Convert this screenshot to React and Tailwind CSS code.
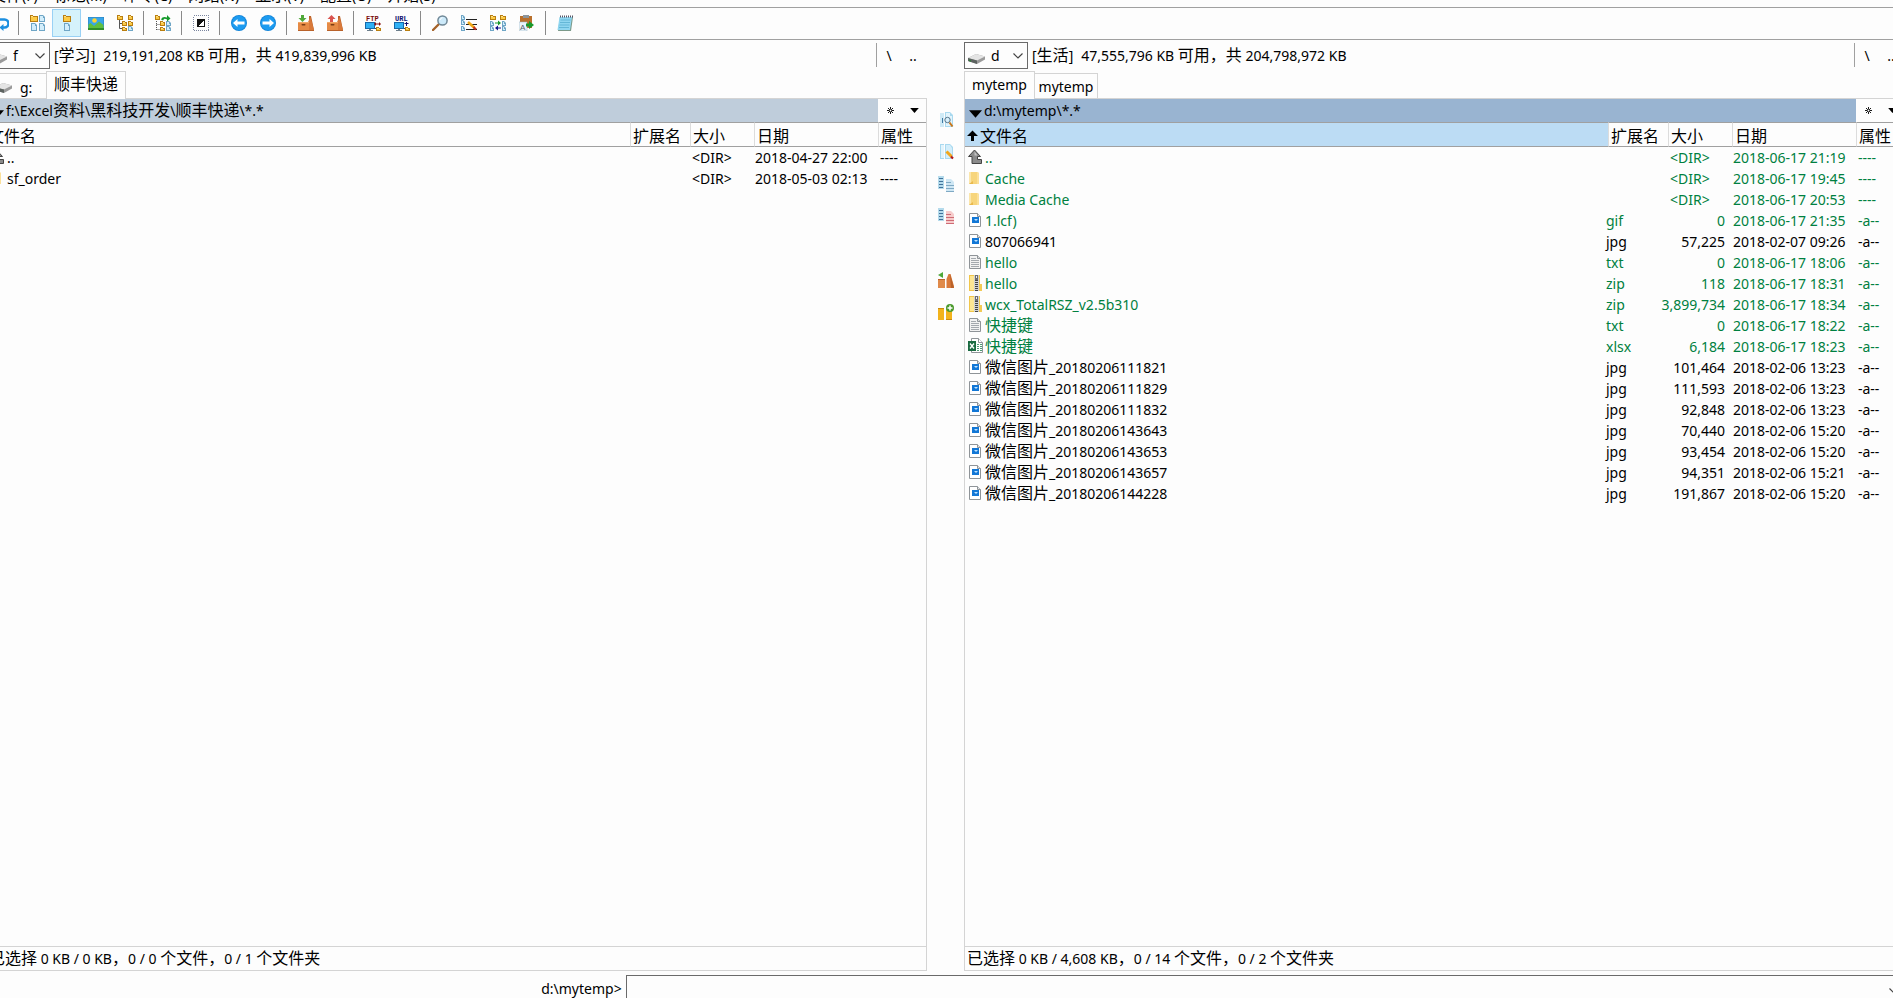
import React from "react";

const CJK = /([\u3000-\u303f\u4e00-\u9fff\uff00-\uffef]+)/;

/* Latin at 14px, Chinese at 16px, on one baseline. */
function Mixed({ children }) {
  return children.split(CJK).map((part, i) =>
    i % 2 === 1 ? (
      <span key={i} className="text-base leading-none">
        {part}
      </span>
    ) : (
      part
    )
  );
}

function Icon({ children, size = 16 }) {
  return (
    <svg viewBox="0 0 16 16" width={size} height={size} className="block shrink-0" aria-hidden="true">
      {children}
    </svg>
  );
}

/* ---------- shared icon parts ---------- */

const MiniFolder = ({ x, y, w = 7, h = 6 }) => (
  <g>
    <path d={`M${x} ${y}h3v1h${w - 3}v${h - 1}h-${w}z`} fill="#b97e10" />
    <rect x={x + 1} y={y + 2} width={w - 2} height={h - 3} fill="#fccb45" />
    <rect x={x + 1} y={y + 1} width={2} height={1} fill="#fbe08c" />
  </g>
);

const MiniPage = ({ x, y, w = 6, h = 7 }) => (
  <g>
    <path d={`M${x} ${y}h${w - 2}l2 2v${h - 2}h-${w}z`} fill="#6fa6c6" />
    <path d={`M${x + 1} ${y + 1}h${w - 3}v2h1v${h - 4}h-${w - 2}z`} fill="#d3eefb" />
  </g>
);

const Monitor = () => (
  <g>
    <rect x="0" y="7" width="10" height="7" fill="#1668a8" />
    <rect x="1" y="8" width="8" height="5" fill="#2fb0f5" />
    <path d="M4 14h2v1h2v1h-6v-1h2z" fill="#6d7f8c" />
    <MiniFolder x={11} y={12} w={5} h={4} />
    <path d="M10 13.500h1" stroke="#444" />
  </g>
);

const Box = () => (
  <g>
    <path d="M11 1l2 0l3 14h-5z" fill="#b9622a" />
    <path d="M9.500 8l3-6l3.500 13h-5z" fill="#d9793a" />
    <rect x="0" y="7" width="11" height="9" fill="#e58a45" />
    <rect x="0" y="7" width="11" height="1" fill="#f3a866" />
    <rect x="0" y="15" width="16" height="1" fill="#b9622a" />
    <rect x="3.500" y="9" width="4" height="1.500" rx="0.700" fill="#7b3d14" />
  </g>
);

/* ---------- toolbar icons ---------- */

const icons = {
  refresh: (
    <g fill="none" stroke="#1c8fe0" strokeWidth="2.600">
      <path d="M2 9.500a4.500 4.500 0 0 1 4.500-5h5a3.500 3.500 0 0 1 0 8h-3" />
      <path d="M10.500 9l-4 3.500 4 3.500z" fill="#1c8fe0" stroke="none" />
    </g>
  ),
  brief: (
    <g>
      <MiniFolder x={0} y={0} w={8} h={7} />
      <MiniPage x={9} y={0} />
      <MiniPage x={1} y={8} w={6} h={8} />
      <MiniPage x={9} y={8} w={6} h={8} />
    </g>
  ),
  full: (
    <g>
      <MiniFolder x={4} y={0} w={8} h={7} />
      <MiniPage x={5} y={8} w={6} h={8} />
    </g>
  ),
  thumbs: (
    <g>
      <rect x="0" y="2" width="16" height="13" fill="#2a7fb8" />
      <rect x="0.500" y="2.500" width="15" height="12" fill="#38a5ea" />
      <circle cx="6.500" cy="5.500" r="2.300" fill="#fdd32d" />
      <path d="M0.500 14.500v-5l2-1.500 3.500 3 5-4.500 4.500 3.500v4.500z" fill="#5fbf3f" />
      <path d="M0 13h16v2h-16z" fill="#2f8f28" />
    </g>
  ),
  tree: (
    <g>
      <path d="M2.500 5v8.500h3M2.500 8.500h3M12.500 8v4" fill="none" stroke="#555" />
      <MiniFolder x={0} y={0} w={6} h={5} />
      <MiniFolder x={5} y={6} w={5} h={5} />
      <MiniFolder x={11} y={0} w={5} h={5} />
      <MiniFolder x={11} y={6} w={5} h={5} />
      <MiniFolder x={5} y={12} w={5} h={4} />
      <MiniPage x={11} y={11} w={5} h={5} />
    </g>
  ),
  branch: (
    <g>
      <path d="M1.500 4v11.500M1.500 9.500h3M1.500 14.500h3" fill="none" stroke="#555" strokeDasharray="1 1" />
      <MiniFolder x={0} y={0} w={5} h={5} />
      <MiniFolder x={5} y={6} w={5} h={5} />
      <MiniFolder x={5} y={12} w={5} h={4} />
      <MiniPage x={11} y={6} w={5} h={5} />
      <MiniPage x={11} y={11} w={5} h={5} />
      <path d="M6 4.500c1-3 4-3 6-2V0l3.500 3.500L12 6.500V4.500c-2-1-3-1-4 1z" fill="#159a2c" />
    </g>
  ),
  invert: (
    <g shapeRendering="crispEdges">
      <rect x="0.500" y="0.500" width="15" height="15" fill="none" stroke="#7b86a0" strokeDasharray="1 1" />
      <rect x="4" y="4" width="8" height="8" fill="#111" />
      <path d="M11 5v6h-6z" fill="#fff" />
    </g>
  ),
  back: (
    <g>
      <circle cx="8" cy="8" r="8" fill="#1284d8" />
      <circle cx="8" cy="8" r="7.200" fill="#1c9bf0" />
      <path d="M2 8l4.500-4v2.500h7v3h-7v2.500z" fill="#fff" />
    </g>
  ),
  forward: (
    <g>
      <circle cx="8" cy="8" r="8" fill="#1284d8" />
      <circle cx="8" cy="8" r="7.200" fill="#1c9bf0" />
      <path d="M14 8l-4.500-4v2.500h-7v3h7v2.500z" fill="#fff" />
    </g>
  ),
  pack: (
    <g>
      <Box />
      <path d="M3 0h3v3h2.500l-4 4-4-4h2.500z" fill="#4fa83a" />
    </g>
  ),
  unpack: (
    <g>
      <Box />
      <path d="M3 7h3v-3h2.500l-4-4-4 4h2.500z" fill="#d9534f" />
    </g>
  ),
  ftp: (
    <g>
      <text x="1" y="6" fontSize="7" fontWeight="700" fontFamily="Liberation Mono, monospace" fill="#7a0c0c">FTP</text>
      <Monitor />
      <path d="M9 9l2-2v1.500h3v-1.500l2 2-2 2v-1.500h-3v1.500z" fill="#8a1010" />
    </g>
  ),
  url: (
    <g>
      <text x="1" y="6" fontSize="7" fontWeight="700" fontFamily="Liberation Mono, monospace" fill="#10106e">URL</text>
      <Monitor />
      <path d="M12 7h1v1h1.500v1h-1.500v2h-1v-2h-1.500v-1h1.500z" fill="#10106e" />
    </g>
  ),
  search: (
    <g>
      <path d="M1 15l5.500-5.500" stroke="#a5632a" strokeWidth="2.400" strokeLinecap="round" />
      <circle cx="10.500" cy="5.500" r="4.600" fill="#cdeafa" stroke="#6f8796" strokeWidth="1.500" />
      <path d="M8 5a3 3 0 0 1 2.500-2.300" stroke="#fff" fill="none" />
    </g>
  ),
  rename: (
    <g>
      <MiniPage x={0} y={0} w={4} h={5} />
      <MiniPage x={0} y={5} w={4} h={5} />
      <MiniPage x={0} y={11} w={4} h={5} />
      <path d="M5 4.500h11M5 9.500h11M5 14.500h11" stroke="#222" />
      <path d="M7 7l6.500 6" stroke="#f0a818" strokeWidth="2.600" />
      <path d="M12.500 12l2.500 2.500" stroke="#c23020" strokeWidth="2.200" />
    </g>
  ),
  sync: (
    <g>
      <MiniFolder x={0} y={0} w={6} h={5} />
      <MiniFolder x={10} y={0} w={6} h={5} />
      <MiniPage x={0} y={6} w={4} h={5} />
      <MiniPage x={0} y={11} w={4} h={5} />
      <MiniPage x={12} y={6} w={4} h={5} />
      <MiniPage x={12} y={11} w={4} h={5} />
      <path d="M5 7.500h3v-2l3 2.500-3 2.500v-2h-3z" fill="#189a2c" />
      <path d="M11 12.500h-3v-2l-3 2.500 3 2.500v-2h3z" fill="#12128a" />
    </g>
  ),
  copyNames: (
    <g>
      <rect x="1" y="1" width="12" height="12" fill="#b9702c" />
      <rect x="4" y="0" width="6" height="3" fill="#8d959b" />
      <rect x="0" y="7" width="8" height="9" fill="#e9f3fa" stroke="#9db4c4" strokeWidth="0.500" />
      <text x="1" y="14.500" fontSize="8" fontFamily="Liberation Sans, sans-serif" fill="#51606b">A</text>
      <path d="M7 8.500h3v-2.500l5 4-5 4v-2.500h-3z" fill="#189a2c" />
    </g>
  ),
  notepad: (
    <g>
      <path d="M3 2h13l-2 14h-13z" fill="#7c9a8a" />
      <path d="M2.500 2h12.500l-2 13h-12.500z" fill="#8fd6f0" />
      <path d="M3.500 5h10M3 7.500h10M2.500 10h10M2 12.500h10" stroke="#59aed0" strokeWidth="0.800" />
      <path d="M3 1.500h13" stroke="#556" strokeWidth="2" strokeDasharray="1 1" />
    </g>
  ),
  view: (
    <g>
      <path d="M2 1h4v14h-4z" fill="#cfeaf6" />
      <path d="M7 0h5l3 3v12h-8z" fill="#a9d9ef" />
      <path d="M8 1h4v3h2v10h-6z" fill="#e2f4fc" />
      <path d="M4.500 6v5" stroke="#3f7ba3" />
      <circle cx="9.500" cy="8" r="2.700" fill="#d7f0fb" stroke="#55738a" />
      <path d="M11.500 10.500l3 4" stroke="#c9771c" strokeWidth="2" />
    </g>
  ),
  edit: (
    <g>
      <path d="M2 0h4v15h-4z" fill="#a9d9ef" />
      <path d="M3 1h3v13h-3z" fill="#e2f4fc" />
      <path d="M7 0h5l3 3v12h-8z" fill="#a9d9ef" />
      <path d="M8 1h4l2 3v10h-6z" fill="#d3eefb" />
      <path d="M8.500 7.500l5 5" stroke="#f2a71b" strokeWidth="3" />
      <path d="M13 12.500l2 2" stroke="#b81818" strokeWidth="2.200" />
    </g>
  ),
  copy: (
    <g>
      <path d="M0 0h6v13h-6z" fill="#b5dbec" />
      <path d="M1 2.500h4M1 5.500h4M1 8.500h4M1 11.500h4" stroke="#40729a" />
      <path d="M8 3h5l3 3v10h-8z" fill="#cfe7f4" />
      <path d="M8 6.500h5M8 9.500h8M8 12.500h8M8 15.500h8" stroke="#7fa9c4" />
    </g>
  ),
  move: (
    <g>
      <path d="M0 0h6v13h-6z" fill="#b5dbec" />
      <path d="M1 2.500h4M1 5.500h4M1 8.500h4M1 11.500h4" stroke="#40729a" />
      <path d="M8 3h5l3 3v10h-8z" fill="#f6cccc" />
      <path d="M8 6.500h5M8 9.500h8M8 12.500h8M8 15.500h8" stroke="#cf6b74" />
    </g>
  ),
  packSide: (
    <g>
      <rect x="0" y="7" width="7" height="9" fill="#e08a4a" />
      <rect x="0" y="7" width="7" height="1" fill="#b9622a" />
      <path d="M8.500 16v-9l2-5h2l4 14z" fill="#d9793a" />
      <path d="M12 2l4 14h-3z" fill="#b9622a" />
      <path d="M5 0v6l-5-3z" fill="#4fa83a" />
    </g>
  ),
  newFolder: (
    <g>
      <rect x="0" y="4" width="6" height="12" fill="#f2b31c" />
      <rect x="0" y="4" width="6" height="1" fill="#c98a10" />
      <rect x="8" y="5" width="6" height="11" fill="#f2b31c" />
      <rect x="8" y="15" width="6" height="1" fill="#c98a10" />
      <circle cx="12" cy="4" r="4" fill="#4a9a2c" />
      <path d="M12 1.500v5M9.500 4h5" stroke="#fff" strokeWidth="1.500" />
    </g>
  ),
};

/* ---------- file list icons ---------- */

const fileIcons = {
  up: (
    <g>
      <path d="M6.500 1l6 6.500h-3v3h4v4h-9.500v-7h-3.500z" fill="#8b8b8b" stroke="#444" strokeWidth="1" />
      <path d="M6.500 2.500l3 4h-3z" fill="#c4c4c4" />
    </g>
  ),
  folder: (
    <g>
      <path d="M1 2h8l2 1v11h-10z" fill="#f7d57c" />
      <path d="M1 2h2v11l-2 1z" fill="#fbe6ab" />
      <path d="M9 2l2 1v11h-2z" fill="#fbe09a" />
      <path d="M1 14l4-3v3z" fill="#e9b94d" />
    </g>
  ),
  image: (
    <g>
      <path d="M1.500 1.500h8l3 3v10h-11z" fill="#fff" stroke="#8f9498" />
      <path d="M9.500 1.500v3h3" fill="#e4e6e8" stroke="#8f9498" />
      <rect x="4" y="5" width="7" height="6" fill="#1277d6" />
      <path d="M6 7h4l-2 2z" fill="#bfe4ff" />
    </g>
  ),
  text: (
    <g>
      <path d="M1.500 1.500h8l3 3v10h-11z" fill="#f2f2f2" stroke="#8f9498" />
      <path d="M9.500 1.500v3h3" fill="#ddd" stroke="#8f9498" />
      <path d="M3 4.500h5M3 6.500h8M3 8.500h8M3 10.500h8M3 12.500h8" stroke="#a4a9ae" />
    </g>
  ),
  zip: (
    <g>
      <path d="M1 0h11v16h-11z" fill="#f1c64a" />
      <path d="M2 1h9v14h-9z" fill="#fde693" />
      <path d="M11 9h3v7h-3z" fill="#f3ca55" />
      <rect x="6" y="0" width="5" height="16" fill="#d2d2d2" />
      <path d="M8.500 5v11" stroke="#444" strokeWidth="3" strokeDasharray="1 1" />
      <path d="M7 0h3v5h-3z" fill="#6d6d6d" />
      <path d="M8 1h1v2h-1z" fill="#eee" />
    </g>
  ),
  excel: (
    <g>
      <path d="M3.500 0.500h7l4 4v10h-11z" fill="#fff" stroke="#8f9498" />
      <path d="M10.500 0.500v4h4" fill="#fff" stroke="#8f9498" />
      <path d="M9 6.500h2M12 6.500h2M9 8.500h2M12 8.500h2M9 10.500h2M12 10.500h2M9 12.500h2M12 12.500h2" stroke="#4e9a73" />
      <rect x="0" y="3" width="8" height="10" fill="#1b6b42" />
      <path d="M2 5.500l4 5M6 5.500l-4 5" stroke="#fff" strokeWidth="1.300" />
    </g>
  ),
};

const DriveIcon = () => (
  <svg viewBox="0 0 20 12" width="20" height="12" className="block shrink-0" aria-hidden="true">
    <path d="M1 5l8-4 9 2.500v3l-8 4.500-9-3z" fill="#9a9a9a" />
    <path d="M1 5l8-4 9 2.500-8 4z" fill="#e4e4e4" />
    <path d="M1 5l9 2.500v3.500l-9-3z" fill="#5d6360" />
    <path d="M2 6.500l2 0.700v1.500l-2-0.700z" fill="#2f7d3a" />
  </svg>
);

const Chevron = () => (
  <svg viewBox="0 0 10 6" width="10" height="6" className="block" fill="none" stroke="#444" strokeWidth="1.200" aria-hidden="true">
    <path d="M0.500 0.500l4.500 4.500 4.500-4.500" />
  </svg>
);

const Triangle = ({ w, h }) => (
  <svg viewBox="0 0 12 7" width={w} height={h} className="block shrink-0" aria-hidden="true">
    <path d="M0 0h12l-6 7z" fill="#000" />
  </svg>
);

/* ---------- data ---------- */

const menus = ["文件(F)", "标记(M)", "命令(C)", "网络(N)", "显示(V)", "配置(O)", "开始(S)"];

const toolbar = [
  ["refresh"],
  ["brief", "full", "thumbs", "tree"],
  ["branch"],
  ["invert"],
  ["back", "forward"],
  ["pack", "unpack"],
  ["ftp", "url"],
  ["search", "rename", "sync", "copyNames"],
  ["notepad"],
];

const sideTools = ["view", "edit", "copy", "move", null, "packSide", "newFolder"];

const leftFiles = [
  ["up", "..", "", "<DIR>", "2018-04-27 22:00", "----", false],
  ["folder", "sf_order", "", "<DIR>", "2018-05-03 02:13", "----", false],
];

const rightFiles = [
  ["up", "..", "", "<DIR>", "2018-06-17 21:19", "----", true],
  ["folder", "Cache", "", "<DIR>", "2018-06-17 19:45", "----", true],
  ["folder", "Media Cache", "", "<DIR>", "2018-06-17 20:53", "----", true],
  ["image", "1.lcf)", "gif", "0", "2018-06-17 21:35", "-a--", true],
  ["image", "807066941", "jpg", "57,225", "2018-02-07 09:26", "-a--", false],
  ["text", "hello", "txt", "0", "2018-06-17 18:06", "-a--", true],
  ["zip", "hello", "zip", "118", "2018-06-17 18:31", "-a--", true],
  ["zip", "wcx_TotalRSZ_v2.5b310", "zip", "3,899,734", "2018-06-17 18:34", "-a--", true],
  ["text", "快捷键", "txt", "0", "2018-06-17 18:22", "-a--", true],
  ["excel", "快捷键", "xlsx", "6,184", "2018-06-17 18:23", "-a--", true],
  ["image", "微信图片_20180206111821", "jpg", "101,464", "2018-02-06 13:23", "-a--", false],
  ["image", "微信图片_20180206111829", "jpg", "111,593", "2018-02-06 13:23", "-a--", false],
  ["image", "微信图片_20180206111832", "jpg", "92,848", "2018-02-06 13:23", "-a--", false],
  ["image", "微信图片_20180206143643", "jpg", "70,440", "2018-02-06 15:20", "-a--", false],
  ["image", "微信图片_20180206143653", "jpg", "93,454", "2018-02-06 15:20", "-a--", false],
  ["image", "微信图片_20180206143657", "jpg", "94,351", "2018-02-06 15:21", "-a--", false],
  ["image", "微信图片_20180206144228", "jpg", "191,867", "2018-02-06 15:20", "-a--", false],
];

/* ---------- sections ---------- */

function MenuBar() {
  return (
    <nav className="-ml-1 flex h-[7px] shrink-0 items-end overflow-hidden">
      {menus.map((m) => (
        <button key={m} type="button" className="-mb-px h-6 shrink-0 px-2 leading-6 whitespace-nowrap">
          <Mixed>{m}</Mixed>
        </button>
      ))}
    </nav>
  );
}

function Toolbar() {
  return (
    <div role="toolbar" className="flex h-[33px] shrink-0 items-center divide-x divide-[#8a8a8a] border-y border-[#a0a0a0] pb-px">
      {toolbar.map((group, g) => (
        <div key={g} className={g === 0 ? "flex h-6 items-center pr-[3px]" : "flex h-6 items-center px-1"}>
          {group.map((name) => (
            <button
              key={name}
              type="button"
              aria-label={name}
              className={
                name === "full"
                  ? "flex h-7 w-[29px] items-center justify-center border border-[#99d1f5] bg-[#d5f2fb] pl-px"
                  : "flex h-7 w-[29px] items-center justify-center pl-px"
              }
            >
              <Icon>{icons[name]}</Icon>
            </button>
          ))}
        </div>
      ))}
    </div>
  );
}

function DriveBar({ drive, volume, space }) {
  return (
    <div className="flex h-[31px] shrink-0 pt-0.5">
      <div className="relative h-[27px] w-16 shrink-0 border border-[#6a6a6a]">
        <select aria-label="drive" defaultValue={drive} className="h-full w-full appearance-none bg-transparent pl-[26px]">
          <option value={drive}>{drive}</option>
        </select>
        <span className="pointer-events-none absolute top-2.5 left-0.5">
          <DriveIcon />
        </span>
        <span className="pointer-events-none absolute top-2.5 right-1">
          <Chevron />
        </span>
      </div>
      <div className="flex min-w-0 flex-1 gap-2 pl-1 leading-[27px] whitespace-nowrap">
        <span>
          <Mixed>{volume}</Mixed>
        </span>
        <span>
          <Mixed>{space}</Mixed>
        </span>
      </div>
      <div className="mt-px flex h-6 w-[51px] shrink-0 items-center border-l border-[#a0a0a0]">
        <button type="button" className="w-6 pt-0.5">\</button>
        <button type="button" className="w-6 pt-0.5">..</button>
      </div>
    </div>
  );
}

function PathBar({ path, active }) {
  return (
    <div className="flex h-6 shrink-0 border-t border-[#d4d4d4]">
      <div
        className={
          active
            ? "flex min-w-0 flex-1 items-center gap-0.5 bg-[#99b4d1] pl-1 whitespace-nowrap"
            : "flex min-w-0 flex-1 items-center gap-0.5 bg-[#bfcddb] pl-1 whitespace-nowrap"
        }
      >
        <span className="pt-1.5">
          <Triangle w={13} h={8} />
        </span>
        <span className="leading-6">
          <Mixed>{path}</Mixed>
        </span>
      </div>
      <div className="flex w-12 shrink-0 items-center">
        <button type="button" aria-label="favorites" className="flex w-6 justify-center">
          <svg viewBox="0 0 7 7" width="7" height="7" aria-hidden="true">
            <path d="M3.500 0v7M0 3.500h7M1 1l5 5M6 1l-5 5" stroke="#000" fill="none" strokeWidth="0.900" />
            <circle cx="3.500" cy="3.500" r="0.900" fill="#fff" />
          </svg>
        </button>
        <button type="button" aria-label="history" className="flex w-6 justify-center">
          <Triangle w={9} h={5} />
        </button>
      </div>
    </div>
  );
}

function FileTable({ files, sorted }) {
  return (
    <div className="min-h-0 flex-1 overflow-hidden">
      <table className="w-full table-fixed border-separate border-spacing-0 whitespace-nowrap">
        <colgroup>
          <col />
          <col className="w-[60px]" />
          <col className="w-16" />
          <col className="w-[124px]" />
          <col className="w-12" />
        </colgroup>
        <thead>
          <tr>
            <th
              className={
                sorted
                  ? "h-[25px] border-y border-[#a0a0a0] bg-[#bcdcf4] p-0 text-left font-normal"
                  : "h-[25px] border-y border-[#a0a0a0] p-0 text-left font-normal"
              }
            >
              <button type="button" className={sorted ? "flex items-center gap-0.5 pt-0.5 pl-0.5 leading-[21px]" : "flex items-center pt-0.5 pl-px leading-[21px]"}>
                {sorted && (
                  <svg viewBox="0 0 11 12" width="11" height="12" aria-hidden="true">
                    <path d="M5.500 0.500l5.500 5.500h-4v5h-3v-5h-4z" fill="#000" />
                  </svg>
                )}
                <Mixed>文件名</Mixed>
              </button>
            </th>
            {["扩展名", "大小", "日期", "属性"].map((h) => (
              <th key={h} className="h-[25px] border-y border-l border-y-[#a0a0a0] border-l-[#dcdcdc] p-0 text-left font-normal">
                <button type="button" className="flex items-center pt-0.5 pl-0.5 leading-[21px]">
                  <Mixed>{h}</Mixed>
                </button>
              </th>
            ))}
          </tr>
        </thead>
        <tbody>
          {files.map(([icon, name, ext, size, date, attr, green], i) => (
            <tr key={i} className={green ? "h-[21px] leading-[21px] text-[#008040]" : "h-[21px] leading-[21px] text-black"}>
              <td className="p-0">
                <div className="flex items-center gap-px pl-[3px]">
                  <span className="pb-px">
                    <Icon>{fileIcons[icon]}</Icon>
                  </span>
                  <span>
                    <Mixed>{name}</Mixed>
                  </span>
                </div>
              </td>
              <td className="p-0">
                <span className="-ml-0.5">{ext}</span>
              </td>
              <td className="p-0">
                <div className={size === "<DIR>" ? "flex pl-0.5" : "flex justify-end pr-[7px]"}>
                  <span>{size}</span>
                </div>
              </td>
              <td className="p-0 pl-px">{date}</td>
              <td className="p-0 pl-0.5">{attr}</td>
            </tr>
          ))}
        </tbody>
      </table>
    </div>
  );
}

function Panel({ drive, volume, space, tabs, path, active, files, status }) {
  return (
    <section className="flex min-h-0 min-w-0 flex-col">
      <DriveBar drive={drive} volume={volume} space={space} />
      <div className="-mb-px flex h-7 shrink-0 items-end">{tabs}</div>
      <div className="flex min-h-0 flex-1 flex-col border-x border-[#d4d4d4]">
        <PathBar path={path} active={active} />
        <FileTable files={files} sorted={active} />
        <div className="h-[25px] shrink-0 overflow-hidden border-y border-[#d4d4d4] pl-0.5 leading-[23px] whitespace-nowrap">
          <Mixed>{status}</Mixed>
        </div>
      </div>
    </section>
  );
}

export default function App() {
  return (
    <div className="h-screen w-full overflow-hidden bg-[#fdfdfd] font-['Noto_Sans','Noto_Sans_CJK_SC',sans-serif] text-sm text-black">
      <div className="-mr-3 -ml-3.5 flex h-full flex-col">
        <MenuBar />
        <Toolbar />
        <main className="grid min-h-0 flex-1 grid-cols-[minmax(0,1fr)_37px_minmax(0,1fr)] grid-rows-[minmax(0,1fr)]">
          <Panel
            drive="f"
            volume="[学习]"
            space="219,191,208 KB 可用，共 419,839,996 KB"
            tabs={
              <>
                <button type="button" className="flex h-[26px] w-[60px] items-center gap-1.5 border-t border-[#d4d4d4] pt-0.5 pl-2">
                  <DriveIcon />
                  <span>g:</span>
                </button>
                <button type="button" className="relative h-7 w-20 border border-b-0 border-[#d4d4d4] bg-[#fdfdfd] pb-0.5 leading-6">
                  <Mixed>顺丰快递</Mixed>
                </button>
              </>
            }
            path="f:\Excel资料\黑科技开发\顺丰快递\*.*"
            active={false}
            files={leftFiles}
            status="已选择 0 KB / 0 KB，0 / 0 个文件，0 / 1 个文件夹"
          />
          <div className="flex flex-col pt-16">
            {sideTools.map((name, i) =>
              name ? (
                <button key={i} type="button" aria-label={name} className="flex h-8 w-full items-center justify-center pl-px">
                  <Icon>{icons[name]}</Icon>
                </button>
              ) : (
                <span key={i} className="h-8" />
              )
            )}
          </div>
          <Panel
            drive="d"
            volume="[生活]"
            space="47,555,796 KB 可用，共 204,798,972 KB"
            tabs={
              <>
                <button type="button" className="relative h-7 w-[71px] border border-b-0 border-[#d4d4d4] bg-[#fdfdfd] pb-0.5 leading-6">
                  mytemp
                </button>
                <button type="button" className="h-[26px] w-[63px] border-t border-r border-[#d4d4d4] leading-6">
                  mytemp
                </button>
              </>
            }
            path="d:\mytemp\*.*"
            active
            files={rightFiles}
            status="已选择 0 KB / 4,608 KB，0 / 14 个文件，0 / 2 个文件夹"
          />
        </main>
        <div className="flex h-[27px] shrink-0 items-start overflow-hidden pt-1">
          <label htmlFor="command" className="w-1/3 shrink-0 pr-1 text-right leading-[28px]">
            d:\mytemp&gt;
          </label>
          <div className="relative h-[30px] flex-1 border-t border-l border-[#6a6a6a]">
            <input id="command" type="text" className="h-full w-full bg-transparent px-1 outline-none" />
            <span className="pointer-events-none absolute top-3 right-1.5">
              <Chevron />
            </span>
          </div>
        </div>
      </div>
    </div>
  );
}
